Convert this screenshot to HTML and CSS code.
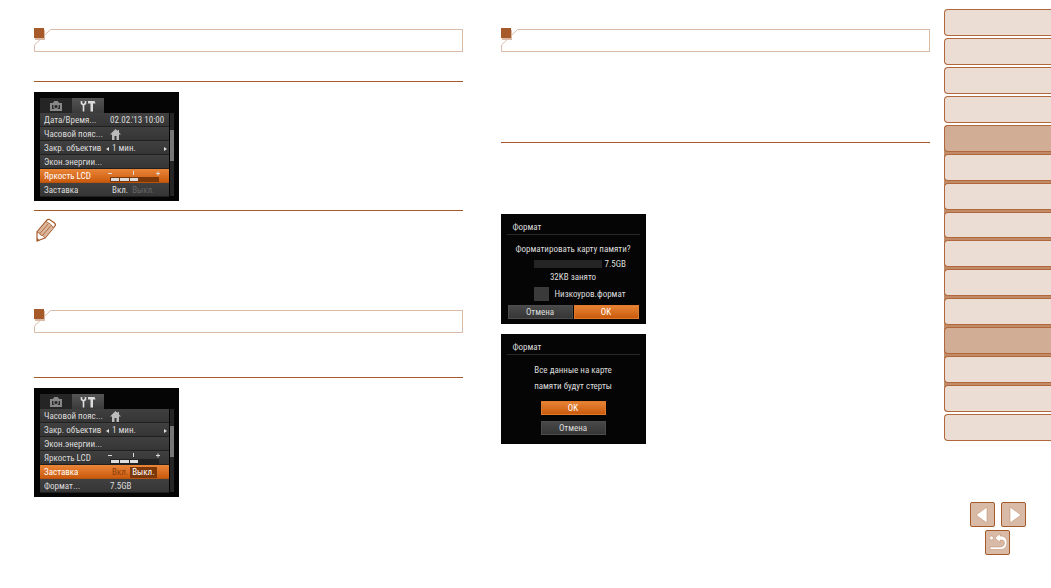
FILE: index.html
```html
<!DOCTYPE html>
<html lang="ru">
  <head>
    <meta charset="UTF-8" />
    <meta name="viewport" content="width=device-width, initial-scale=1.0" />
    <title>Меню настройки</title>
    <link rel="stylesheet" href="styles.css">
  </head>

  <body>
    <svg class="defs" aria-hidden="true">
      <symbol id="corner" viewBox="0 0 17 24">
        <path d="M17 1.5H16.5L.5 17V23.5H17" fill="none" stroke="#dabba8" />
        <rect x="1" y="2" width="10" height="10" fill="#dabba8" />
        <rect width="10" height="10" fill="#a65a2a" />
      </symbol>
      <symbol id="camera" viewBox="0 0 12 10">
        <path d="M0 2H3L4 0H8L9 2H12V10H0ZM2 4V8H10V4Z" fill="#888" fill-rule="evenodd" />
        <circle cx="6" cy="5.500" r="2.200" fill="#252525" stroke="#888" stroke-width="1.200" />
      </symbol>
      <symbol id="tools" viewBox="0 0 16 12">
        <path d="M1.500 1V3.500L3.500 5L5.500 3.500V1M3.500 4V11.500" fill="none" stroke="#ddd" stroke-width="1.600" />
        <path d="M8 1H14.500L15.500 3.500H13V11.500H10.500V3.500H8Z" fill="#ddd" />
      </symbol>
      <symbol id="home" viewBox="0 0 11 11">
        <path d="M5.500 0L7.500 2V1H9V3.500L11 5.500H9V11H6.500V7H4.500V11H2V5.500H0Z" fill="#bbb" />
      </symbol>
    </svg>

    <main class="page">
      <section class="column">
        <div class="heading">
          <svg class="corner"><use href="#corner" /></svg>
          <div class="heading-box"></div>
        </div>
        <hr class="rule">
        <div class="screen menu-screen">
          <div class="tabs">
            <span class="tab"><svg class="camera"><use href="#camera" /></svg></span>
            <span class="tab active"><svg class="tools"><use href="#tools" /></svg></span>
          </div>
          <div class="menu">
            <ul class="rows">
              <li><span>Дата/Время...</span><span class="value">02.02.'13 10:00</span></li>
              <li><span>Часовой пояс...</span><span class="value"><svg class="home"><use href="#home" /></svg></span></li>
              <li><span>Закр. объектив</span><span class="value choice">1 мин.</span></li>
              <li><span>Экон.энергии...</span></li>
              <li class="selected"><span>Яркость LCD</span><span class="value"><svg class="level" viewBox="0 0 52 12"><path d="M0 2.500H4M25.500 0V4M48 2.500H52M50 .5V4.500" stroke="#ddd" fill="none" /><path d="M2 6H51V11H2Z" fill="#7c3808" /><path d="M3 7H11V10H3ZM12 7H21V10H12ZM22 7H30V10H22Z" fill="#ddd" /></svg></span></li>
              <li><span>Заставка</span><span class="value"><span class="option">Вкл.</span><span class="option off">Выкл.</span></span></li>
            </ul>
            <div class="scroll"><div class="thumb"></div></div>
          </div>
        </div>
        <hr class="rule note-rule">
        <svg class="pencil" viewBox="0 0 20 25">
          <path d="M1 14L11 2Q12 1 13.500 1.500L18.500 5Q20 6.500 19 8L9 20L1 23Z" fill="#fff" stroke="#a65a2a" stroke-width="1.200" />
          <path d="M1.500 14L10 4L18 9L9 19.500L6.500 17.500L4.500 17Z" fill="#dcb69c" />
          <path d="M1 14L3.500 15L4.500 17L7 17.500L9 20M4 15.500L12.500 5.500M6.500 17.500L15 7.500M9.500 3.500Q15 5 17.500 10" fill="none" stroke="#a65a2a" stroke-width="0.800" />
          <path d="M1 23.500V20L4 22.500Z" fill="#a65a2a" />
        </svg>

        <div class="heading second">
          <svg class="corner"><use href="#corner" /></svg>
          <div class="heading-box"></div>
        </div>
        <hr class="rule second-rule">
        <div class="screen menu-screen">
          <div class="tabs">
            <span class="tab"><svg class="camera"><use href="#camera" /></svg></span>
            <span class="tab active"><svg class="tools"><use href="#tools" /></svg></span>
          </div>
          <div class="menu">
            <ul class="rows">
              <li><span>Часовой пояс...</span><span class="value"><svg class="home"><use href="#home" /></svg></span></li>
              <li><span>Закр. объектив</span><span class="value choice">1 мин.</span></li>
              <li><span>Экон.энергии...</span></li>
              <li><span>Яркость LCD</span><span class="value"><svg class="level" viewBox="0 0 52 12"><path d="M0 2.500H4M25.500 0V4M48 2.500H52M50 .5V4.500" stroke="#ddd" fill="none" /><path d="M2 6H51V11H2Z" fill="#222" /><path d="M3 7H11V10H3ZM12 7H21V10H12ZM22 7H30V10H22Z" fill="#ddd" /></svg></span></li>
              <li class="selected"><span>Заставка</span><span class="value"><span class="option dim">Вкл.</span><span class="option on">Выкл.</span></span></li>
              <li><span>Формат...</span><span class="value">7.5GB</span></li>
            </ul>
            <div class="scroll"><div class="thumb"></div></div>
          </div>
        </div>
      </section>

      <section class="column">
        <div class="heading">
          <svg class="corner"><use href="#corner" /></svg>
          <div class="heading-box"></div>
        </div>
        <hr class="rule format-rule">
        <div class="screen dialog format">
          <h2>Формат</h2>
          <p>Форматировать карту памяти?</p>
          <div class="usage"><div class="bar"></div><span>7.5GB</span></div>
          <p>32KB занято</p>
          <label class="check"><input type="checkbox">Низкоуров.формат</label>
          <div class="buttons">
            <button>Отмена</button>
            <button class="primary">OK</button>
          </div>
        </div>
        <div class="screen dialog confirm">
          <h2>Формат</h2>
          <p>Все данные на карте<br>памяти будут стерты</p>
          <button class="primary">OK</button>
          <button>Отмена</button>
        </div>
      </section>

      <aside class="side">
        <nav class="chapters">
          <a href="#"></a>
          <a href="#"></a>
          <a href="#"></a>
          <a href="#"></a>
          <div class="group">
            <a href="#" class="dark"></a>
            <a href="#"></a>
            <a href="#"></a>
            <a href="#"></a>
            <a href="#"></a>
            <a href="#"></a>
            <a href="#"></a>
            <a href="#" class="dark"></a>
            <a href="#"></a>
            <a href="#"></a>
          </div>
          <a href="#"></a>
        </nav>
        <div class="pager">
          <button aria-label="Назад"><svg viewBox="0 0 23 23"><path d="M16 4V20L5 12Z" /></svg></button>
          <button aria-label="Вперед"><svg viewBox="0 0 23 23"><path d="M8 4V20L19 12Z" /></svg></button>
          <button aria-label="Вернуться"><svg viewBox="0 0 23 23"><circle cx="5.500" cy="7" r="2" /><path d="M9 7L14 2.500V5H16Q21 6 21 11.500Q21 18 15 18.500H4V16H15Q18.500 15 18.500 12Q18.500 9 15.500 9H14V11.500Z" /></svg></button>
        </div>
      </aside>
    </main>
  </body>
</html>
```
FILE: styles.css
```css
* {
  box-sizing: border-box;
}

body {
  margin: 0;
  background: #fff;
  font-family: "Liberation Sans Narrow", "Roboto Condensed", Roboto, sans-serif;
  font-size: 9px;
  line-height: 12px;
}

.defs {
  position: absolute;
  width: 0;
  height: 0;
}

/* both columns keep the same text width */
.page {
  display: grid;
  grid-template-columns: calc(50% - 42px) 1fr 107px;
  padding-left: 34px;
}

.column {
  padding-top: 28px;
  margin-right: 38px;
}

.column + .column {
  margin-right: 14px;
}

.heading {
  display: flex;
  height: 24px;
}

.corner {
  width: 17px;
  height: 24px;
}

.heading-box {
  flex: 1;
  margin-top: 1px;
  border: 1px solid #dabba8;
  border-left: none;
}

.rule {
  height: 1px;
  margin: 29px 0 10px;
  border: none;
  background: #a65a2a;
}

.note-rule {
  margin: 9px 0 7px;
}

.second {
  margin-top: 66px;
}

.second-rule {
  margin-top: 44px;
}

.format-rule {
  margin: 90px 0 71px;
}

.pencil {
  display: block;
  width: 20px;
  height: 25px;
  margin-left: 2px;
}

.screen {
  width: 145px;
  background: #050505;
  color: #ddd;
}

.menu-screen {
  padding: 6px 5px 5px 6px;
}

.tabs {
  display: flex;
  height: 15px;
}

.tab {
  display: flex;
  align-items: center;
  justify-content: center;
  width: 32px;
  background: #252525;
}

.tab.active {
  background: linear-gradient(#555, #3a3a3a);
}

.camera {
  width: 12px;
  height: 10px;
}

.tools {
  width: 16px;
  height: 12px;
}

.menu {
  display: flex;
  gap: 1px;
  height: 83px;
}

.rows {
  flex: 1;
  display: grid;
  grid-auto-rows: 1fr;
  margin: 0;
  padding: 0;
  list-style: none;
}

.rows li {
  display: grid;
  grid-template-columns: 66px 1fr;
  align-items: center;
  padding-top: 2px;
  padding-left: 4px;
  border-bottom: 1px solid #202020;
  background: linear-gradient(#404040, #353535);
  line-height: 11px;
  white-space: nowrap;
}

.rows .selected {
  border-color: #b8540e;
  background: linear-gradient(#ea8538, #cb5b0e);
  color: #fff;
}

.value {
  display: flex;
  align-items: center;
  height: 11px;
}

.choice {
  justify-content: space-between;
  padding-right: 2px;
}

.choice::before,
.choice::after {
  content: "";
  order: 1;
  border: 2px solid transparent;
  border-left: 3px solid #ddd;
  border-right: none;
}

.choice::before {
  order: 0;
  margin-left: -4px;
  margin-right: 3px;
  border-left: none;
  border-right: 3px solid #ddd;
}

.choice::after {
  margin-left: auto;
}

.home {
  width: 11px;
  height: 11px;
}

.level {
  width: 52px;
  height: 12px;
  margin-left: -2px;
}

.option {
  padding: 0 2px;
}

.rows .off {
  color: #666;
}

.rows .dim {
  color: #8a3e0c;
}

.on {
  background: #7c3808;
  color: #fff;
}

.scroll {
  width: 4px;
  padding-top: 17px;
  background: #252525;
}

.thumb {
  height: 31px;
  background: #777;
}

.dialog {
  height: 110px;
  padding-top: 6px;
  text-align: center;
}

.dialog h2 {
  height: 15px;
  margin: 0 6px;
  padding-left: 6px;
  border-bottom: 1px solid #282828;
  font-size: 9px;
  font-weight: normal;
  line-height: 14px;
  text-align: left;
}

.dialog p {
  margin: 0;
}

.format h2 {
  margin-bottom: 8px;
}

.usage {
  display: flex;
  align-items: center;
  gap: 3px;
  height: 15px;
  margin: 1px 0 0 33px;
}

.bar {
  width: 68px;
  height: 8px;
  background: #252525;
}

.check {
  display: flex;
  align-items: center;
  gap: 6px;
  margin: 4px 0 4px 33px;
}

.check input {
  appearance: none;
  width: 15px;
  height: 14px;
  margin: 0;
  background: #3a3a3a;
}

.buttons {
  display: grid;
  grid-template-columns: 1fr 1fr;
  gap: 1px;
  margin: 0 7px;
}

.dialog button {
  height: 14px;
  padding: 0;
  border: 1px solid #4d4d4d;
  background: linear-gradient(#484848, #363636);
  color: #ddd;
  font: inherit;
}

.dialog .primary {
  border-color: #e27a2b;
  background: linear-gradient(#e68335, #cb5b0e);
  color: #fff;
}

.confirm {
  margin-top: 10px;
}

.confirm p {
  margin: 7px 0;
  line-height: 16px;
}

.confirm button {
  display: block;
  width: 65px;
  margin: 0 auto 6px;
}

.chapters {
  display: grid;
  grid-template-rows: repeat(15, 1fr);
  gap: 2px;
  height: 432px;
  margin-top: 9px;
}

.chapters a {
  border: 1px solid #b0673b;
  border-right: none;
  border-radius: 4px 0 0 4px;
  background: #ebddd4;
}

.chapters .dark {
  background: #d0ad94;
}

.group {
  display: grid;
  grid-row: span 10;
  grid-auto-rows: 1fr;
  gap: 2px;
  border-radius: 4px 0 0 4px;
  background: #c18b68;
}

.pager {
  display: flex;
  flex-wrap: wrap;
  justify-content: center;
  gap: 3px 6px;
  width: 60px;
  margin: 61px auto 0;
}

.pager button {
  width: 25px;
  height: 25px;
  padding: 0;
  border: 1px solid #a65a2a;
  border-radius: 2px;
  background: #d9baa7;
}

.pager svg {
  display: block;
  width: 23px;
  height: 23px;
  fill: #fff;
  stroke: #bd8560;
  stroke-width: 0.5;
}
```
